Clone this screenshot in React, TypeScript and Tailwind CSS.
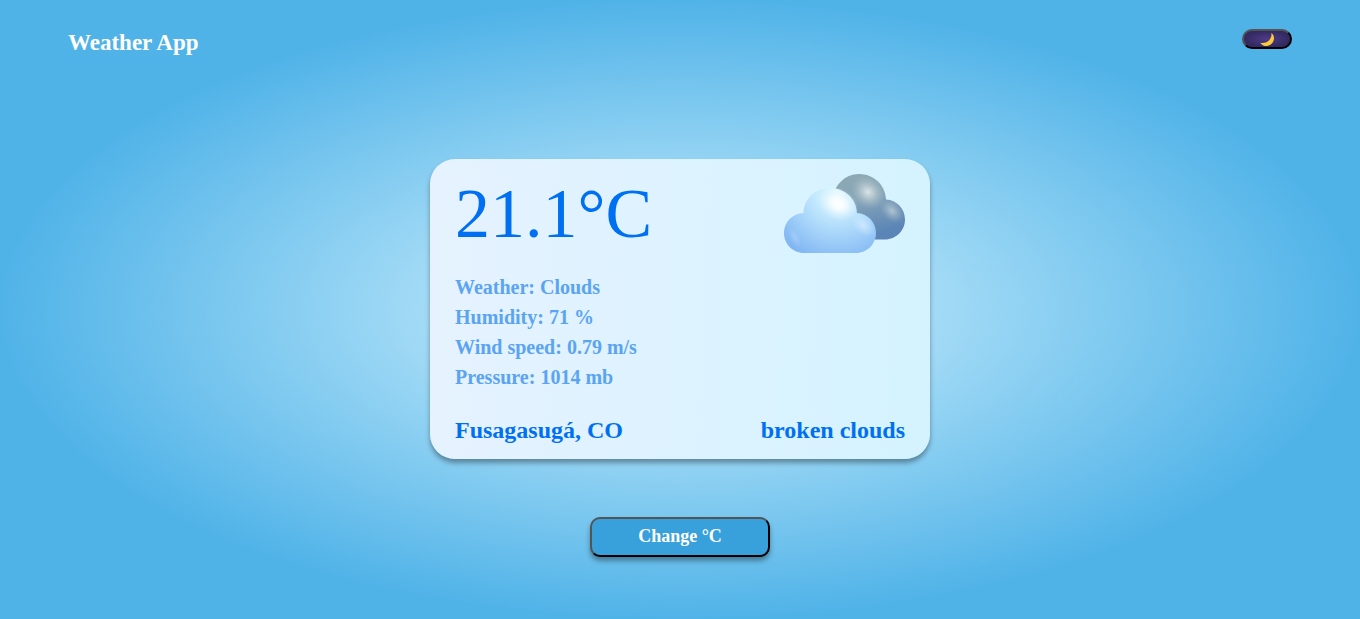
import { useState } from "react";

const details = [
  { label: "Weather", value: "Clouds" },
  { label: "Humidity", value: "71 %" },
  { label: "Wind speed", value: "0.79 m/s" },
  { label: "Pressure", value: "1014 mb" },
];

function MoonIcon() {
  return (
    <svg viewBox="0 0 16 16" className="size-4" aria-hidden="true">
      <path
        d="M12.300 2C14.900 3.600 15.700 7.200 14.300 10.200 12.700 13.700 9.300 15.500 6 14.900 3.800 14.500 2.100 13.300 1.200 11.700 4.200 12.300 7.800 11.600 10 9.400 12 7.400 12.800 4.800 12.300 2Z"
        fill="#fdcb3a"
      />
    </svg>
  );
}

function BrokenCloudsIcon() {
  return (
    <svg viewBox="0 0 121 80" className="w-[121px] shrink-0" role="img" aria-label="Broken clouds">
      <defs>
        <linearGradient id="backBase" x1="0" y1="0" x2="0.3" y2="1">
          <stop offset="0" stopColor="#8ea9b3" />
          <stop offset="0.45" stopColor="#86a5b8" />
          <stop offset="1" stopColor="#5b85b6" />
        </linearGradient>
        <radialGradient id="backGlow">
          <stop offset="0" stopColor="#dce5e7" />
          <stop offset="0.35" stopColor="#c2d1d6" stopOpacity="0.75" />
          <stop offset="1" stopColor="#a0b5bd" stopOpacity="0" />
        </radialGradient>
        <radialGradient id="frontBase" gradientUnits="userSpaceOnUse" cx="54" cy="17" r="74">
          <stop offset="0" stopColor="#e0f8ff" />
          <stop offset="0.3" stopColor="#c5ebfd" />
          <stop offset="0.62" stopColor="#a4d2f9" />
          <stop offset="1" stopColor="#7eb4f2" />
        </radialGradient>
        <radialGradient id="frontGlow">
          <stop offset="0" stopColor="#ffffff" />
          <stop offset="0.3" stopColor="#ffffff" stopOpacity="0.85" />
          <stop offset="0.65" stopColor="#ffffff" stopOpacity="0.3" />
          <stop offset="1" stopColor="#ffffff" stopOpacity="0" />
        </radialGradient>
        <radialGradient id="softGlow">
          <stop offset="0" stopColor="#d4ebff" stopOpacity="0.8" />
          <stop offset="1" stopColor="#d4ebff" stopOpacity="0" />
        </radialGradient>
      </defs>
      <path
        d="M49 27C49 12 60.500 0 75 0c14.500 0 26.500 11 27 25.500C112.500 26 121 34.500 121 45.500S112 65.500 101 65.500H60C54 65.500 49 60 49 54Z"
        fill="url(#backBase)"
      />
      <ellipse cx="84" cy="18" rx="19" ry="16" fill="url(#backGlow)" transform="rotate(40 84 18)" />
      <ellipse cx="108" cy="37" rx="14" ry="10" fill="url(#backGlow)" opacity="0.6" transform="rotate(45 108 37)" />
      <path
        d="M20 79C9 79 0 70 0 59s8.500-19.500 19.500-20C20 24.500 31.500 14 46 14s26.500 10.500 27 25c10.500.5 19 9 19 20s-9 20-20 20Z"
        fill="url(#frontBase)"
      />
      <ellipse cx="54" cy="30" rx="21" ry="16" fill="url(#frontGlow)" transform="rotate(25 54 30)" />
      <ellipse cx="79" cy="51" rx="14" ry="9" fill="url(#softGlow)" transform="rotate(45 79 51)" />
      <ellipse cx="11" cy="64" rx="11" ry="5" fill="url(#softGlow)" opacity="0.35" transform="rotate(65 11 64)" />
    </svg>
  );
}

export default function App() {
  const [fahrenheit, setFahrenheit] = useState(false);

  return (
    <div className="grid min-h-screen grid-rows-[1fr_auto_1fr] justify-items-center bg-[radial-gradient(50%_50%_at_50%_50%,#d4f2fe_0%,#50b3e8_100%)] pb-px font-['Liberation_Serif',serif] font-bold">
      <header className="flex w-full items-start justify-between px-[5%] pt-7">
        <h1 className="text-[23px] leading-[30px] text-white">Weather App</h1>
        <button
          type="button"
          aria-label="Dark mode"
          className="mt-px flex h-5 w-[50px] items-center justify-center rounded-[10px] border-2 border-black bg-[radial-gradient(50%_50%_at_50%_50%,#4f3a87_0%,#322a60_100%)] [border-style:outset]"
        >
          <MoonIcon />
        </button>
      </header>

      <main className="flex min-h-[300px] w-[500px] max-w-full flex-col rounded-[25px] bg-[linear-gradient(92deg,#e6f2ff_0%,#d4f3ff_100%)] px-[25px] py-[15px] shadow-[0_4px_5px_rgba(0,0,0,0.35)]">
        <div className="flex items-start justify-between">
          <p className="text-[70px] leading-20 font-normal text-[#0070f3]">
            {fahrenheit ? "70.0°F" : "21.1°C"}
          </p>
          <BrokenCloudsIcon />
        </div>
        <ul className="mt-[18px] text-xl leading-[30px] text-[#5aa4f2]">
          {details.map(({ label, value }) => (
            <li key={label}>
              {label}: {value}
            </li>
          ))}
        </ul>
        <div className="mt-auto flex justify-between text-2xl leading-7 text-[#0070f3]">
          <h2>Fusagasugá, CO</h2>
          <p>broken clouds</p>
        </div>
      </main>

      <button
        type="button"
        onClick={() => setFahrenheit(!fahrenheit)}
        className="mt-[58px] h-10 w-[180px] rounded-[10px] border-2 border-black bg-[#38a0db] pb-0.5 text-lg leading-5 text-white shadow-[0_4px_5px_rgba(0,0,0,0.35)] [border-style:outset]"
      >
        Change {fahrenheit ? "°F" : "°C"}
      </button>
    </div>
  );
}
